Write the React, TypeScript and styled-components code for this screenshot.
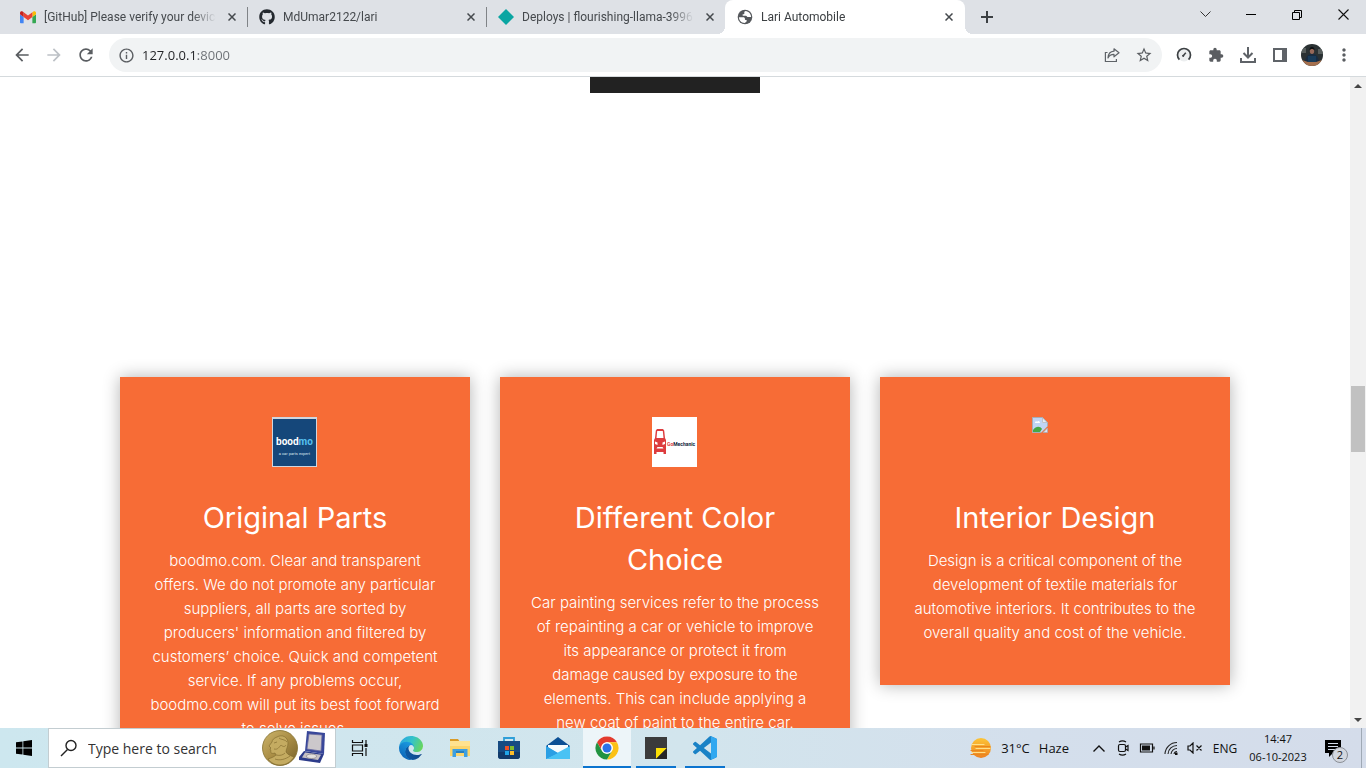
import React from "react";
import styled, { createGlobalStyle, css } from "styled-components";
import {
  MdArrowBack,
  MdArrowForward,
  MdExtension,
  MdInfoOutline,
  MdMoreVert,
  MdRefresh,
  MdStarBorder,
} from "react-icons/md";
import { FaGithub } from "react-icons/fa";

const UI_FONT = `"Open Sans", "Noto Sans", sans-serif`;
const TAB_FONT = `Roboto, "Open Sans", sans-serif`;
const PAGE_FONT = `Inter, "Open Sans", sans-serif`;

const GlobalStyle = createGlobalStyle`
  *, *::before, *::after { box-sizing: border-box; }
  html, body { margin: 0; padding: 0; }
  body { font-family: ${UI_FONT}; color: #202124; background: #fff; }
  button { border: 0; padding: 0; margin: 0; background: none; font: inherit; color: inherit; }
  svg { display: block; flex: none; }
`;

const Desktop = styled.div`
  display: flex;
  flex-direction: column;
  height: 100vh;
  overflow: hidden;
`;

/* ---------- tab strip ---------- */

const TabStrip = styled.header`
  display: flex;
  flex: none;
  height: 34px;
  padding-left: 8px;
  background: #dee1e6;
`;

const Tabs = styled.nav`
  display: flex;
`;

const Tab = styled.div<{ $active?: boolean; $divider?: boolean }>`
  position: relative;
  display: flex;
  align-items: center;
  width: 239px;
  padding: 0 5px 0 12px;
  font-family: ${TAB_FONT};
  font-size: 12px;
  line-height: 16px;
  color: ${(p) => (p.$active ? "#3c4043" : "#45494d")};
  ${(p) =>
    p.$active &&
    css`
      width: 240px;
      padding-right: 6px;
      background: #fff;
      border-radius: 8px 8px 0 0;
      &::before,
      &::after {
        content: "";
        position: absolute;
        bottom: 0;
        width: 8px;
        height: 8px;
      }
      &::before {
        left: -8px;
        background: radial-gradient(circle at 0 0, #dee1e6 8px, #fff 8px);
      }
      &::after {
        right: -8px;
        background: radial-gradient(circle at 100% 0, #dee1e6 8px, #fff 8px);
      }
    `}
  ${(p) =>
    p.$divider &&
    css`
      &::after {
        content: "";
        position: absolute;
        right: -1px;
        top: 7px;
        width: 1px;
        height: 20px;
        background: #808387;
      }
    `}
`;

const TabTitle = styled.a`
  flex: 1;
  min-width: 0;
  margin: 0 6px 0 8px;
  overflow: hidden;
  white-space: nowrap;
  color: inherit;
  text-decoration: none;
  mask-image: linear-gradient(to right, #000 calc(100% - 24px), transparent);
`;

const TabClose = styled.button`
  display: grid;
  place-items: center;
  width: 20px;
  height: 20px;
`;

const NewTab = styled.button`
  display: grid;
  place-items: center;
  width: 28px;
  height: 34px;
  margin-left: 8px;
`;

const WindowControls = styled.div`
  display: flex;
  height: 29px;
  margin-left: auto;
`;

const WindowButton = styled.button`
  display: grid;
  place-items: center;
  width: 46px;
`;

/* ---------- toolbar ---------- */

const Toolbar = styled.div`
  display: flex;
  flex: none;
  align-items: center;
  height: 43px;
  padding: 0 6px;
  background: #fff;
  border-bottom: 1px solid #d5dadd;
  color: #5f6368;
`;

const ToolButton = styled.button<{ $dim?: boolean }>`
  display: grid;
  flex: none;
  place-items: center;
  width: 32px;
  height: 32px;
  color: ${(p) => (p.$dim ? "#bdc1c6" : "#5a5d61")};
`;

const AddressBar = styled.form`
  display: flex;
  flex: 1;
  align-items: center;
  min-width: 0;
  height: 34px;
  margin: 0 6px 0 7px;
  padding: 0 2px 0 1px;
  background: #f1f3f4;
  border-radius: 17px;
`;

const AddressInput = styled.input`
  flex: 1;
  min-width: 0;
  height: 24px;
  padding: 0;
  border: 0;
  outline: 0;
  font-family: ${UI_FONT};
  font-size: 13px;
  color: transparent;
  background: linear-gradient(to right, #202124 56px, #6b6f74 56px);
  background-clip: text;
  -webkit-background-clip: text;
`;

/* ---------- web page ---------- */

const Viewport = styled.div`
  display: flex;
  flex: 1;
  min-height: 0;
`;

const Page = styled.main`
  flex: 1;
  min-width: 0;
  overflow: hidden;
  font-family: ${PAGE_FONT};
`;

const DarkBlock = styled.div`
  width: 170px;
  height: 16px;
  margin: 0 auto 284px;
  background: #222;
`;

const Cards = styled.section`
  display: grid;
  grid-template-columns: repeat(3, 1fr);
  align-items: start;
  gap: 30px;
  max-width: 1110px;
  margin: 0 auto;
`;

const Card = styled.article`
  padding: 40px 24px;
  background: #f76c36;
  box-shadow: 0 0 16px rgba(0, 0, 0, 0.3);
  color: #fff;
  text-align: center;
`;

const CardPicture = styled.div`
  width: 46px;
  height: 50px;
  margin: 0 auto 30px;
`;

const CardTitle = styled.h4`
  margin: 0 0 10px;
  font-size: 29px;
  font-weight: 400;
  line-height: 42px;
  white-space: pre-line;
`;

const CardText = styled.p`
  margin: 0;
  font-size: 15px;
  font-weight: 300;
  line-height: 24px;
  white-space: pre-line;
`;

const ScrollTrack = styled.div`
  display: flex;
  flex: none;
  flex-direction: column;
  align-items: center;
  width: 16px;
  background: #f1f1f1;
`;

const ScrollArrow = styled.button`
  display: grid;
  place-items: center;
  width: 16px;
  height: 17px;
`;

const ScrollThumb = styled.div`
  width: 14px;
  height: 66px;
  margin-top: 292px;
  margin-bottom: auto;
  background: #c1c1c1;
`;

/* ---------- taskbar ---------- */

const Taskbar = styled.footer`
  display: flex;
  flex: none;
  height: 40px;
  background: linear-gradient(to right, #cde7ef, #d2e5ed 50%, #d4dfec 76%, #d4dcea);
  color: #111;
`;

const TaskButton = styled.button<{ $focused?: boolean }>`
  display: grid;
  place-items: center;
  flex: none;
  width: 48px;
  background: ${(p) => (p.$focused ? "#edf5f9" : "transparent")};
`;

const SearchBox = styled.label`
  display: flex;
  align-items: center;
  width: 288px;
  padding: 0 7px 0 11px;
  background: #fff;
  border: 1px solid #c3cdd1;
`;

const SearchInput = styled.input`
  flex: 1;
  min-width: 0;
  height: 24px;
  margin-left: 10px;
  padding: 0;
  border: 0;
  outline: 0;
  background: none;
  font-family: ${UI_FONT};
  font-size: 14px;
  &::placeholder {
    color: #333;
    opacity: 1;
  }
`;

const Apps = styled.div`
  display: flex;
  gap: 1px;
  margin-left: 3px;
`;

const AppButton = styled(TaskButton)<{ $running?: boolean }>`
  position: relative;
  &::after {
    content: "";
    position: absolute;
    bottom: 0;
    left: ${(p) => (p.$focused ? "0" : "4px")};
    right: ${(p) => (p.$focused ? "0" : "4px")};
    height: 2px;
    background: ${(p) => (p.$running ? "#0b74cf" : "transparent")};
  }
`;

const Tray = styled.div`
  display: flex;
  margin-left: auto;
  font-size: 12px;
`;

const Weather = styled.button`
  display: flex;
  align-items: center;
  gap: 9px;
  padding-right: 18px;
  font-size: 13px;
`;

const TrayButton = styled.button<{ $width?: number }>`
  display: grid;
  place-items: center;
  width: ${(p) => p.$width ?? 24}px;
`;

const Clock = styled(TrayButton)`
  align-content: center;
  line-height: 18px;
  font-size: 11px;
`;

const NoticeButton = styled(TrayButton)`
  position: relative;
  padding-right: 8px;
`;

const NoticeBadge = styled.span`
  position: absolute;
  right: 13px;
  bottom: 5px;
  width: 16px;
  height: 16px;
  border: 1px solid #8b8f96;
  border-radius: 50%;
  background: #d3d7df;
  font-size: 11px;
  line-height: 14px;
  text-align: center;
`;

const ShowDesktop = styled.button`
  width: 5px;
  border-left: 1px solid #9fa9b5;
`;

/* ---------- drawings ---------- */

const CloseIcon = () => (
  <svg width="8" height="8" viewBox="0 0 8 8" stroke="#45494d" strokeWidth="1.5">
    <path d="M.5.5l7 7M7.5.5l-7 7" />
  </svg>
);

const GmailIcon = () => (
  <svg width="16" height="16" viewBox="0 -7 512 512">
    <path fill="#4285f4" d="M34.91 448.818h81.454V251L0 163.727V413.91c0 19.287 15.622 34.91 34.91 34.91z" />
    <path fill="#34a853" d="M395.636 448.818h81.455c19.287 0 34.909-15.622 34.909-34.909V163.727L395.636 251z" />
    <path fill="#fbbc04" d="M395.636 99.727V251L512 163.727v-46.545c0-43.142-49.25-67.782-83.782-41.891z" />
    <path fill="#ea4335" d="M116.364 251V99.727L256 204.455 395.636 99.727V251L256 355.727z" />
    <path fill="#c5221f" d="M0 117.182v46.545L116.364 251V99.727L83.782 75.29C49.25 49.4 0 74.04 0 117.182z" />
  </svg>
);

const NetlifyIcon = () => (
  <svg width="16" height="16" viewBox="0 0 16 16">
    <path fill="#0aa5a2" d="M8 0l8 8-8 8-8-8z" />
  </svg>
);

const GlobeIcon = () => (
  <svg width="16" height="16" viewBox="0 0 16 16">
    <circle cx="8" cy="8" r="7.3" fill="#55585c" />
    <path fill="#fff" d="M8.500 1.900c-1.200.500-1.500 1.100-1.100 1.900.3.800-.3 1.500-1.300 1.500-.8.100-.9 1.300.2 1.400h2.600c1 0 1.100 1.300 2.100 1.400h3.100c.1-3.100-2.300-5.900-5.600-6.200z" />
    <path fill="#fff" d="M2 8.200h4.200c1 0 1.800.5 1.700 1.500-.1.800.2 1.300 1.200 1.400.9.100.9.900.4 1.500-.4.600-1 1.200-1.900 1.400C4.400 13.800 2 11.400 2 8.200z" />
  </svg>
);

const ShareIcon = () => (
  <svg width="16" height="16" viewBox="0 0 16 16" fill="none" stroke="#5f6368" strokeWidth="1.2">
    <path d="M3.5 5.5H1.4v9h11V12" />
    <path strokeLinejoin="round" d="M10 1.8l5 4-5 4V7.4C6.800 7.400 5 8.800 4 11c.2-4 2.500-6.500 6-6.800z" />
  </svg>
);

const GaugeIcon = () => (
  <svg width="16" height="16" viewBox="0 0 16 16" fill="none">
    <circle cx="8" cy="8" r="6.500" fill="#eceeef" />
    <path stroke="#3c4043" strokeWidth="1.700" d="M3.400 12.600a6.500 6.500 0 1 1 9.200 0" />
    <path stroke="#3c4043" strokeWidth="1.500" d="M6.800 9.200l3-3.400" />
    <circle cx="7.200" cy="8.800" r="1.100" fill="#3c4043" />
  </svg>
);

const DownloadIcon = () => (
  <svg width="18" height="18" viewBox="0 0 18 18" fill="none" stroke="#5f6368" strokeWidth="2">
    <path d="M9 1v10M4.500 7L9 11.500 13.500 7M2 12v4h14v-4" />
  </svg>
);

const SidePanelIcon = () => (
  <svg width="14" height="14" viewBox="0 0 14 14">
    <rect x="1" y="1" width="12" height="12" fill="none" stroke="#5f6368" strokeWidth="2" />
    <path fill="#5f6368" d="M9 0h5v14H9z" />
  </svg>
);

const Avatar = () => (
  <svg width="22" height="22" viewBox="0 0 22 22">
    <defs>
      <clipPath id="avatar-clip">
        <circle cx="11" cy="11" r="11" />
      </clipPath>
    </defs>
    <g clipPath="url(#avatar-clip)">
      <path fill="#2a3133" d="M0 0h22v22H0z" />
      <path fill="#565d5c" d="M0 4h5v5H0zM17 5h5v5h-5z" />
      <path fill="#182c43" d="M4 20c0-6 2-10 7-10s7 4 7 10z" />
      <ellipse cx="11" cy="7" rx="2.200" ry="3" fill="#96695a" />
      <path fill="#0d1012" d="M8.500 6.500c-.4-5 5.400-5 5 0-1-2-4-2-5 0z" />
      <path fill="#a5704e" d="M1 16l6 2h8l6-2-3 6H5z" />
      <path fill="#193c5a" d="M7 12h8v6H7z" />
    </g>
  </svg>
);

const BoodmoLogo = () => (
  <svg width="45" height="50" viewBox="0 0 45 50" role="img" aria-label="boodmo">
    <path fill="#cfd6df" d="M0 0h45v50H0z" />
    <path fill="#15477a" d="M1 2h43v47H1z" />
    <text x="22.500" y="28" textAnchor="middle" fontFamily="Roboto, sans-serif" fontSize="10" fontWeight="700" fill="#fff">
      bood<tspan fill="#55c0f0">mo</tspan>
    </text>
    <text x="22.500" y="38" textAnchor="middle" fontFamily="Roboto, sans-serif" fontSize="4" fill="#dbe5ee">
      a car parts expert
    </text>
  </svg>
);

const GoMechanicLogo = () => (
  <svg width="45" height="50" viewBox="0 0 45 50" role="img" aria-label="GoMechanic">
    <path fill="#fff" d="M0 0h45v50H0z" />
    <path fill="#dd3c3e" d="M5 12h6l1.200 1.500L13 21l1 2v14h-2.500v-2h-7v2H2V23l1-2 .8-7.500z" />
    <path fill="#fff" d="M5.200 14h5.600l.7 7h-7z" />
    <path fill="#fff" d="M3 24.500l2.500 1V28L3 27zM13 24.500l-2.500 1V28l2.500-1zM4.500 31.500l1-1.500h5l1 1.500z" />
    <text x="15" y="29" fontFamily="Roboto, sans-serif" fontSize="5" fontWeight="700" fill="#10233b">
      <tspan fill="#dd3c3e">Go</tspan>Mechanic
    </text>
  </svg>
);

const BrokenImage = () => (
  <svg width="16" height="16" viewBox="0 0 16 16" role="img" aria-label="Missing image">
    <path fill="#fff" stroke="#a5aeb8" d="M.5.5h10l5 5V9L9 15.500H.5z" />
    <path fill="#c0d5f5" d="M1 1h9v5h5v3l-6 6H1z" />
    <path fill="#fff" d="M3 6c0-2 2-2 2-1 1-2 3-1 3 1z" />
    <path fill="#45a845" d="M1 15v-2c3-4 7-4 9-1l-2 3z" />
    <path fill="#e9eef3" stroke="#a5aeb8" strokeWidth=".7" d="M10.500.8V5.500h4.700z" />
    <path fill="#dce6f2" stroke="#a5aeb8" strokeWidth=".7" d="M15.500 11v4.500H11z" />
  </svg>
);

const WindowsIcon = () => (
  <svg width="16" height="16" viewBox="0 0 16 16" fill="#000">
    <path d="M0 2.300l6.500-.9v6.200H0zM7.300 1.300L16 0v7.600H7.300zM0 8.400h6.500v6.200L0 13.700zM7.300 8.400H16V16l-8.700-1.300z" />
  </svg>
);

const SearchIcon = () => (
  <svg width="18" height="18" viewBox="0 0 18 18" fill="none" stroke="#222" strokeWidth="1.400">
    <circle cx="11" cy="6.500" r="5" />
    <path d="M7.500 10.500L1 17" />
  </svg>
);

const MedalIcon = () => (
  <svg width="66" height="36" viewBox="0 0 66 36">
    <defs>
      <linearGradient id="gold" x1="0" y1="0" x2="1" y2="1">
        <stop offset="0" stopColor="#cdb56c" />
        <stop offset=".5" stopColor="#a98d45" />
        <stop offset="1" stopColor="#75602a" />
      </linearGradient>
    </defs>
    <circle cx="18" cy="18" r="17.500" fill="url(#gold)" stroke="#84702f" strokeWidth=".8" />
    <path
      fill="#c4ab61"
      stroke="#7c662c"
      strokeWidth=".6"
      d="M15 7c5-3 11 0 11 6 0 4-2 6-2 9 2 3 5 4 8 5-3 5-8 8-14 8-5 0-9-2-12-6 3-1 6-2 8-4l-1-2c-3 1-5 0-4-2l-1-2 1-1-2-2 3-4c0-2 2-4 5-5z"
    />
    <path fill="none" stroke="#8d7536" strokeWidth=".8" d="M17 8c2 2 6 1 8 4M12 19c4 1 5-2 7-4 2 2 4 2 5 0M14 25c4 1 7 0 9-2M13 29c5 2 11 0 15-3M12 13l3-1" />
    <path fill="#38479a" d="M45 1l18 2-1 21-19-3z" />
    <path fill="#ccc8cb" stroke="#68699f" strokeWidth=".8" d="M47 4l13 1-1 16-14-2z" />
    <path fill="#2c3b8a" d="M42 21l20 3-4 9-21-3v-3z" />
    <path fill="#c6c0c3" d="M43 22.500l16 2.200-3 5.300-16-2.500z" />
    <ellipse cx="49.500" cy="26.300" rx="5" ry="2.200" fill="#e2dfdd" stroke="#827d85" strokeWidth=".7" />
  </svg>
);

const TaskViewIcon = () => (
  <svg width="18" height="16" viewBox="0 0 18 16" fill="none" stroke="#111" strokeWidth="1.200">
    <path d="M1.500 0v2.500h10V0M1.500 16v-2.500h10V16M1.500 5h10v6h-10zM15 0v4M15 8v8" />
    <path fill="#111" stroke="none" d="M13.500 4h3v3h-3z" />
  </svg>
);

const EdgeIcon = () => (
  <svg width="24" height="24" viewBox="0 0 256 256">
    <defs>
      <linearGradient id="edge-deep" x1="0" x2="1">
        <stop offset="0" stopColor="#0c59a4" />
        <stop offset="1" stopColor="#114a8b" />
      </linearGradient>
      <linearGradient id="edge-blue" x1=".6" y1="0" x2=".2" y2="1">
        <stop offset="0" stopColor="#1b9de2" />
        <stop offset="1" stopColor="#0a5fb4" />
      </linearGradient>
      <linearGradient id="edge-green" x1="0" y1=".3" x2="1" y2=".6">
        <stop offset="0" stopColor="#2ba5e2" />
        <stop offset=".5" stopColor="#35c3c8" />
        <stop offset="1" stopColor="#68d65b" />
      </linearGradient>
    </defs>
    <path fill="url(#edge-deep)" d="M235.680 191.730a93.730 93.730 0 0 1-10.540 4.710 101.870 101.870 0 0 1-35.900 6.460c-47.320 0-88.540-32.550-88.540-74.320a31.480 31.480 0 0 1 16.430-27.290c-42.800 1.800-53.800 46.400-53.800 72.530 0 73.880 68.090 81.370 82.760 81.370 7.910 0 19.840-2.300 27-4.560l1.310-.44a128.340 128.340 0 0 0 66.600-52.800 4 4 0 0 0-5.320-5.660z" />
    <path fill="url(#edge-blue)" d="M105.730 241.420a79.200 79.200 0 0 1-22.740-21.340 80.720 80.720 0 0 1 29.530-120c3.130-1.470 8.440-4.130 15.540-4a32.350 32.350 0 0 1 25.690 13 31.880 31.880 0 0 1 6.360 18.660c0-.21 24.460-79.600-80-79.600-43.900 0-80 41.660-80 78.210a130.150 130.150 0 0 0 12.110 56 128 128 0 0 0 156.380 67.110 75.550 75.550 0 0 1-62.780-8z" />
    <path fill="url(#edge-green)" d="M152.330 148.860c-.81 1.050-3.300 2.500-3.300 5.660 0 2.610 1.700 5.120 4.720 7.230 14.380 10 41.490 8.680 41.560 8.680a59.560 59.560 0 0 0 30.270-8.350 61.380 61.380 0 0 0 30.430-52.880c.26-22.410-8-37.310-11.340-43.910C223.460 23.840 177.720 0 128 0A128 128 0 0 0 0 126.200c.48-36.540 36.800-66.050 80-66.050 3.500 0 23.460.34 42 10.070 16.340 8.580 24.900 18.940 30.850 29.210 6.180 10.670 7.280 24.150 7.280 29.520s-2.740 13.330-7.800 19.910z" />
  </svg>
);

const ExplorerIcon = () => (
  <svg width="22" height="20" viewBox="0 0 22 20">
    <path fill="#d99b27" d="M1 1h8l2 3H1z" />
    <path fill="#fcd56b" d="M1 3h20v15H1z" />
    <path fill="#ffe28f" d="M1 3h20v5H1z" />
    <path fill="#3d9fe0" d="M3.500 11h15v8H15v-4H7v4H3.500z" />
    <path fill="#2880bd" d="M7 13h8v2H7z" />
  </svg>
);

const StoreIcon = () => (
  <svg width="24" height="24" viewBox="0 0 24 24">
    <path fill="none" stroke="#2f9fd8" strokeWidth="1.800" d="M7 6V2h10v4" />
    <path fill="#164b82" d="M1 5h22v15c0 2-1 3-3 3H4c-2 0-3-1-3-3z" />
    <path fill="#123b6b" d="M1 16h22v4c0 2-1 3-3 3H4c-2 0-3-1-3-3z" />
    <path fill="#f05125" d="M8 10h4v4H8z" />
    <path fill="#80bb2c" d="M13 10h4v4h-4z" />
    <path fill="#21a6e8" d="M8 15h4v4H8z" />
    <path fill="#fcbc2a" d="M13 15h4v4h-4z" />
  </svg>
);

const MailIcon = () => (
  <svg width="26" height="24" viewBox="0 0 26 24">
    <path fill="#0b4f94" d="M1 10L13 1l12 9v3H1z" />
    <path fill="#f6fbfd" d="M3 9h20v3l-10 6-10-6z" />
    <path fill="#2ca4e7" d="M1 10l12 7.500L1 23z" />
    <path fill="#49c2f4" d="M25 10L1 23h24z" />
    <path fill="#2b9fe4" d="M1 10l12 7-12 6z" />
  </svg>
);

const ChromeIcon = () => (
  <svg width="24" height="24" viewBox="0 0 48 48">
    <circle cx="24" cy="24" r="23" fill="#fff" />
    <path fill="#e33b2e" d="M4.080 12.500A23 23 0 0 1 43.920 12.500H24A11.500 11.500 0 0 0 14.040 29.750z" />
    <path fill="#fbc116" d="M43.920 12.500A23 23 0 0 1 24 47L33.960 29.750A11.500 11.500 0 0 0 24 12.500z" />
    <path fill="#229342" d="M24 47A23 23 0 0 1 4.080 12.500L14.040 29.750A11.500 11.500 0 0 0 33.960 29.750z" />
    <circle cx="24" cy="24" r="11.500" fill="#fff" />
    <circle cx="24" cy="24" r="9" fill="#2b72e8" />
  </svg>
);

const StickyNotesIcon = () => (
  <svg width="22" height="22" viewBox="0 0 22 22">
    <path fill="#3b3b3b" d="M0 0h22v22H0z" />
    <path fill="#fde005" d="M11 11h11L11 22z" />
    <path fill="#272727" d="M22 11v11H11z" />
  </svg>
);

const CodeIcon = () => (
  <svg width="24" height="24" viewBox="0 0 24 24">
    <path
      fill="#1a82c6"
      d="M23.150 2.587L18.210.21a1.494 1.494 0 0 0-1.705.29l-9.460 8.630-4.120-3.128a.999.999 0 0 0-1.276.057L.327 7.261A1 1 0 0 0 .326 8.740L3.899 12 .326 15.260a1 1 0 0 0 .001 1.479L1.650 17.940a.999.999 0 0 0 1.276.057l4.120-3.128 9.460 8.630a1.492 1.492 0 0 0 1.704.290l4.942-2.377A1.500 1.500 0 0 0 24 20.060V3.939a1.500 1.500 0 0 0-.850-1.352zm-5.146 14.861L10.826 12l7.178-5.448v10.896z"
    />
    <path fill="#31a8f0" d="M18.004.2L23.150 2.587c.5.200.850.750.850 1.352V20.060c0 .600-.300 1.100-.850 1.352L18.004 23.800z" />
  </svg>
);

const HazeIcon = () => (
  <svg width="22" height="22" viewBox="0 0 22 22">
    <defs>
      <linearGradient id="haze" x1="0" y1="0" x2="0" y2="1">
        <stop offset="0" stopColor="#fcc537" />
        <stop offset="1" stopColor="#ee8120" />
      </linearGradient>
    </defs>
    <circle cx="11" cy="11" r="10" fill="url(#haze)" />
    <path stroke="#ffe08c" strokeWidth="1.200" strokeLinecap="round" d="M2 7.500h12M6 11.500h14M2 15.500h13" />
    <path stroke="#e8871f" strokeWidth="1.200" strokeLinecap="round" d="M5 9.500h15M1 13.500h12M1 17.500h17" />
  </svg>
);

const ChevronUp = () => (
  <svg width="12" height="7" viewBox="0 0 12 7" fill="none" stroke="#111" strokeWidth="1.400">
    <path d="M.5 6.500L6 1l5.500 5.500" />
  </svg>
);

const MeetNowIcon = () => (
  <svg width="14" height="16" viewBox="0 0 14 16" fill="none" stroke="#111" strokeWidth="1.200">
    <rect x="2.500" y="4.500" width="7" height="7" rx="1.500" />
    <path d="M9.500 7l2.500-1.500v5L9.500 9M3 2c2-1.300 5-1.300 7 0M3 14c2 1.300 5 1.300 7 0" />
  </svg>
);

const BatteryIcon = () => (
  <svg width="16" height="10" viewBox="0 0 16 10">
    <path fill="none" stroke="#111" strokeWidth="1.200" d="M1.500 1h12v8h-12zM15 3.500v3" />
    <path fill="#111" d="M3 2.500h8v5H3z" />
  </svg>
);

const WifiIcon = () => (
  <svg width="14" height="14" viewBox="0 0 14 14" fill="none" stroke="#222" strokeWidth="1.100">
    <path d="M1 13A12 12 0 0 1 13 1.500M4 13a9 9 0 0 1 9-8.500M7 13a6 6 0 0 1 6-5.500M10 13a3 3 0 0 1 3-2.500" />
    <path fill="#111" stroke="none" d="M11 11.500h2.500V14H11z" />
  </svg>
);

const MutedIcon = () => (
  <svg width="16" height="12" viewBox="0 0 16 12" fill="none" stroke="#111" strokeWidth="1.200">
    <path d="M1 4h2l3-3v10L3 8H1zM9.500 3.500l5 5M14.500 3.500l-5 5" />
  </svg>
);

const NoticeIcon = () => (
  <svg width="16" height="17" viewBox="0 0 16 17">
    <path fill="#000" d="M0 0h16v13H8l-4 4v-4H0z" />
    <path stroke="#d4dcea" d="M3 3.500h10M3 6.500h10M3 9.500h10" />
  </svg>
);

/* ---------- data ---------- */

const tabs = [
  { title: "[GitHub] Please verify your device", icon: <GmailIcon />, divider: true },
  { title: "MdUmar2122/lari", icon: <FaGithub size={16} color="#24292f" />, divider: true },
  { title: "Deploys | flourishing-llama-3996", icon: <NetlifyIcon /> },
  { title: "Lari Automobile", icon: <GlobeIcon />, active: true },
];

const cards = [
  {
    title: "Original Parts",
    picture: <BoodmoLogo />,
    text: `boodmo.com. Clear and transparent
offers. We do not promote any particular
suppliers, all parts are sorted by
producers' information and filtered by
customers’ choice. Quick and competent
service. If any problems occur,
boodmo.com will put its best foot forward
to solve issues.`,
  },
  {
    title: `Different Color
Choice`,
    picture: <GoMechanicLogo />,
    text: `Car painting services refer to the process
of repainting a car or vehicle to improve
its appearance or protect it from
damage caused by exposure to the
elements. This can include applying a
new coat of paint to the entire car.`,
  },
  {
    title: "Interior Design",
    picture: <BrokenImage />,
    text: `Design is a critical component of the
development of textile materials for
automotive interiors. It contributes to the
overall quality and cost of the vehicle.`,
  },
];

const apps = [
  { name: "Microsoft Edge", icon: <EdgeIcon /> },
  { name: "File Explorer", icon: <ExplorerIcon /> },
  { name: "Microsoft Store", icon: <StoreIcon /> },
  { name: "Mail", icon: <MailIcon /> },
  { name: "Google Chrome", icon: <ChromeIcon />, running: true, focused: true },
  { name: "Sticky Notes", icon: <StickyNotesIcon />, running: true },
  { name: "Visual Studio Code", icon: <CodeIcon />, running: true },
];

export default function App() {
  return (
    <Desktop>
      <GlobalStyle />
      <TabStrip>
        <Tabs aria-label="Tabs">
          {tabs.map((tab) => (
            <Tab key={tab.title} $active={tab.active} $divider={tab.divider}>
              {tab.icon}
              <TabTitle href="#">{tab.title}</TabTitle>
              <TabClose aria-label={`Close ${tab.title}`}>
                <CloseIcon />
              </TabClose>
            </Tab>
          ))}
        </Tabs>
        <NewTab aria-label="New tab">
          <svg width="12" height="12" viewBox="0 0 12 12" stroke="#3c4043" strokeWidth="2">
            <path d="M6 0v12M0 6h12" />
          </svg>
        </NewTab>
        <WindowControls>
          <WindowButton aria-label="Search tabs">
            <svg width="11" height="7" viewBox="0 0 11 7" fill="none" stroke="#333">
              <path d="M.5.5l5 5 5-5" />
            </svg>
          </WindowButton>
          <WindowButton aria-label="Minimize">
            <svg width="10" height="1" viewBox="0 0 10 1">
              <path d="M0 0h10v1H0z" />
            </svg>
          </WindowButton>
          <WindowButton aria-label="Restore">
            <svg width="10" height="10" viewBox="0 0 10 10" fill="none" stroke="#000">
              <path d="M.5 2.500h7v7h-7zM2.500 2.500v-2h7v7h-2" />
            </svg>
          </WindowButton>
          <WindowButton aria-label="Close window">
            <svg width="11" height="11" viewBox="0 0 11 11" stroke="#111" strokeWidth="1.100">
              <path d="M.5.5l10 10M10.500.5l-10 10" />
            </svg>
          </WindowButton>
        </WindowControls>
      </TabStrip>

      <Toolbar>
        <ToolButton aria-label="Back">
          <MdArrowBack size={20} />
        </ToolButton>
        <ToolButton aria-label="Forward" $dim>
          <MdArrowForward size={20} />
        </ToolButton>
        <ToolButton aria-label="Reload">
          <MdRefresh size={20} />
        </ToolButton>
        <AddressBar onSubmit={(e) => e.preventDefault()}>
          <ToolButton type="button" aria-label="Site information">
            <MdInfoOutline size={17} />
          </ToolButton>
          <AddressInput aria-label="Address" defaultValue="127.0.0.1:8000" spellCheck={false} />
          <ToolButton type="button" aria-label="Share">
            <ShareIcon />
          </ToolButton>
          <ToolButton type="button" aria-label="Bookmark">
            <MdStarBorder size={18} />
          </ToolButton>
        </AddressBar>
        <ToolButton aria-label="Speed test">
          <GaugeIcon />
        </ToolButton>
        <ToolButton aria-label="Extensions">
          <MdExtension size={16} />
        </ToolButton>
        <ToolButton aria-label="Downloads">
          <DownloadIcon />
        </ToolButton>
        <ToolButton aria-label="Side panel">
          <SidePanelIcon />
        </ToolButton>
        <ToolButton aria-label="Profile">
          <Avatar />
        </ToolButton>
        <ToolButton aria-label="Menu">
          <MdMoreVert size={20} />
        </ToolButton>
      </Toolbar>

      <Viewport>
        <Page>
          <DarkBlock />
          <Cards>
            {cards.map((card) => (
              <Card key={card.title}>
                <CardPicture>{card.picture}</CardPicture>
                <CardTitle>{card.title}</CardTitle>
                <CardText>{card.text}</CardText>
              </Card>
            ))}
          </Cards>
        </Page>
        <ScrollTrack>
          <ScrollArrow aria-label="Scroll up">
            <svg width="8" height="4" viewBox="0 0 8 4">
              <path fill="#454545" d="M0 4l4-4 4 4z" />
            </svg>
          </ScrollArrow>
          <ScrollThumb />
          <ScrollArrow aria-label="Scroll down">
            <svg width="8" height="4" viewBox="0 0 8 4">
              <path fill="#454545" d="M0 0l4 4 4-4z" />
            </svg>
          </ScrollArrow>
        </ScrollTrack>
      </Viewport>

      <Taskbar>
        <TaskButton aria-label="Start">
          <WindowsIcon />
        </TaskButton>
        <SearchBox>
          <SearchIcon />
          <SearchInput aria-label="Type here to search" placeholder="Type here to search" />
          <MedalIcon />
        </SearchBox>
        <TaskButton aria-label="Task view">
          <TaskViewIcon />
        </TaskButton>
        <Apps>
          {apps.map((app) => (
            <AppButton key={app.name} aria-label={app.name} $focused={app.focused} $running={app.running}>
              {app.icon}
            </AppButton>
          ))}
        </Apps>
        <Tray>
          <Weather>
            <HazeIcon />
            <span>31°C</span>
            <span>Haze</span>
          </Weather>
          <TrayButton aria-label="Show hidden icons">
            <ChevronUp />
          </TrayButton>
          <TrayButton aria-label="Meet now">
            <MeetNowIcon />
          </TrayButton>
          <TrayButton aria-label="Battery">
            <BatteryIcon />
          </TrayButton>
          <TrayButton aria-label="Network">
            <WifiIcon />
          </TrayButton>
          <TrayButton aria-label="Volume muted">
            <MutedIcon />
          </TrayButton>
          <TrayButton $width={36}>ENG</TrayButton>
          <Clock $width={70}>
            <span>14:47</span>
            <span>06-10-2023</span>
          </Clock>
          <NoticeButton $width={48} aria-label="Notifications">
            <NoticeIcon />
            <NoticeBadge>2</NoticeBadge>
          </NoticeButton>
          <ShowDesktop aria-label="Show desktop" />
        </Tray>
      </Taskbar>
    </Desktop>
  );
}
